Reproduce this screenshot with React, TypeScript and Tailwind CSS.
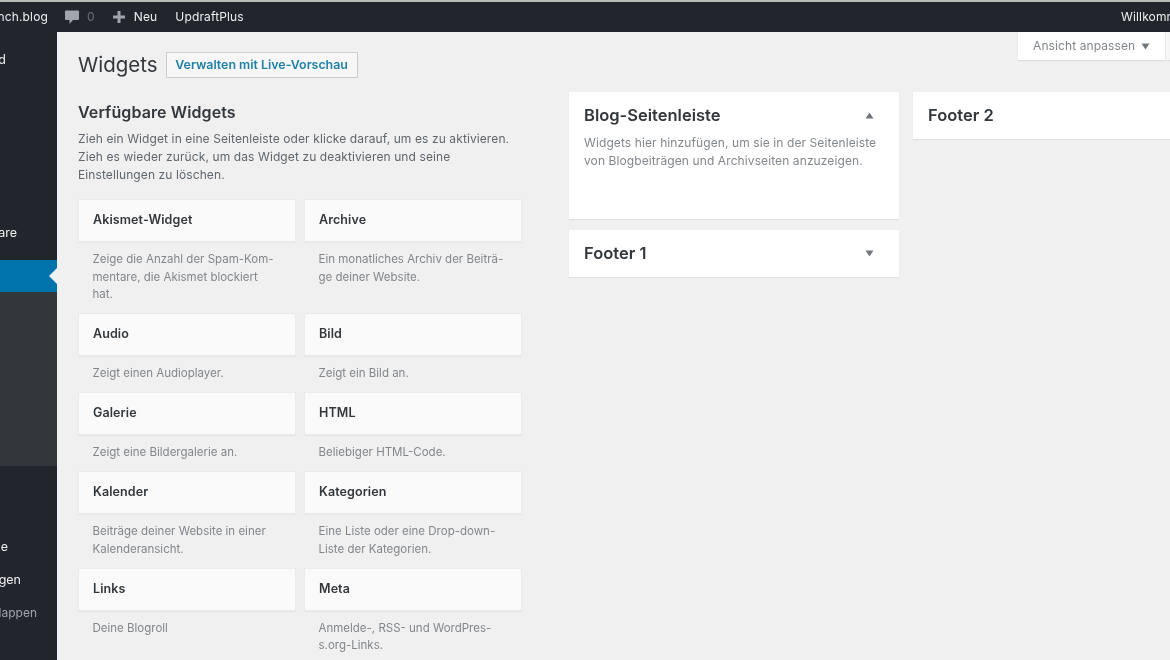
import React from "react";

const font = { fontFamily: "Inter, 'Noto Sans', sans-serif" };

type W = { title: string; desc: string[] };
const rows: [W, W][] = [
  [
    { title: "Akismet-Widget", desc: ["Zeige die Anzahl der Spam-Kom-", "mentare, die Akismet blockiert", "hat."] },
    { title: "Archive", desc: ["Ein monatliches Archiv der Beiträ-", "ge deiner Website."] },
  ],
  [
    { title: "Audio", desc: ["Zeigt einen Audioplayer."] },
    { title: "Bild", desc: ["Zeigt ein Bild an."] },
  ],
  [
    { title: "Galerie", desc: ["Zeigt eine Bildergalerie an."] },
    { title: "HTML", desc: ["Beliebiger HTML-Code."] },
  ],
  [
    { title: "Kalender", desc: ["Beiträge deiner Website in einer", "Kalenderansicht."] },
    { title: "Kategorien", desc: ["Eine Liste oder eine Drop-down-", "Liste der Kategorien."] },
  ],
  [
    { title: "Links", desc: ["Deine Blogroll"] },
    { title: "Meta", desc: ["Anmelde-, RSS- und WordPres-", "s.org-Links."] },
  ],
];

function Widget({ w }: { w: W }) {
  return (
    <div>
      <div className="h-[43px] bg-[#fafafa] border border-[#ebebeb] shadow-[0_1px_1px_rgba(0,0,0,0.04)] flex items-center pl-[14px] text-[12.5px] tracking-[0.1px] font-semibold text-[#32373c]">
        {w.title}
      </div>
      <div className="pt-[9px] pb-[9.5px] pl-[14.5px] text-[11.5px] leading-[17.5px] text-[#82878c] whitespace-nowrap">
        {w.desc.map((d) => (
          <div key={d}>{d}</div>
        ))}
      </div>
    </div>
  );
}

function Triangle({ up }: { up?: boolean }) {
  return (
    <svg width="9" height="7" viewBox="0 0 9 7" className="text-[#72777c]">
      <path d={up ? "M4.5 0.5 L8.5 6.5 L0.5 6.5 Z" : "M0.5 0.5 L8.5 0.5 L4.5 6.5 Z"} fill="currentColor" />
    </svg>
  );
}

function SideItem({ label, pr, cls = "text-[#eeeeee] text-[12.5px]", h }: { label: string; pr: string; cls?: string; h: string }) {
  return (
    <div className={`flex items-center justify-end overflow-hidden whitespace-nowrap ${h} ${pr} ${cls}`}>
      {label}
    </div>
  );
}

export default function App() {
  return (
    <div className="w-[1170px] h-[660px] overflow-hidden flex flex-col bg-[#f0f0f0] blur-[0.5px]" style={font}>
      <div className="h-[2px] bg-[#b8bdb8] shrink-0" />
      <header className="h-[30px] shrink-0 bg-[#21262c] text-[#eeeeee] text-[12px] tracking-[0.15px] flex items-center">
        <div className="w-[48px] flex justify-end overflow-hidden whitespace-nowrap">Testbench.blog</div>
        <svg width="16" height="16" viewBox="0 0 16 16" className="ml-[16px] text-[#a0a5aa]">
          <path d="M2 1.5 H14 Q15 1.5 15 2.5 V10 Q15 11 14 11 H9 L5.5 15 V11 H2 Q1 11 1 10 V2.5 Q1 1.5 2 1.5 Z" fill="currentColor" />
        </svg>
        <span className="ml-[7px] text-[#6b7075]">0</span>
        <svg width="14" height="14" viewBox="0 0 14 14" className="ml-[17px] text-[#a0a5aa]">
          <path d="M5.5 1 H8.5 V5.5 H13 V8.5 H8.5 V13 H5.5 V8.5 H1 V5.5 H5.5 Z" fill="currentColor" />
        </svg>
        <span className="ml-[8px]">Neu</span>
        <span className="ml-[18px]">UpdraftPlus</span>
        <div className="ml-auto w-[49px] overflow-hidden whitespace-nowrap">Willkommen, admin</div>
      </header>
      <div className="flex-1 flex min-h-0">
        <aside className="w-[57px] shrink-0 bg-[#21262c] flex flex-col">
          <div className="h-[228px] pt-[16px]">
            <SideItem label="Dashboard" pr="pr-[51px]" h="h-[24px]" />
            <div className="h-[149px]" />
            <SideItem label="Kommentare" pr="pr-[40px]" h="h-[24px]" />
          </div>
          <div className="relative h-[32px] bg-[#0073aa]">
            <div className="absolute right-0 top-[8px] w-0 h-0 border-y-[8px] border-y-transparent border-r-[8px] border-r-[#f0f0f0]" />
          </div>
          <div className="h-[174px] bg-[#32373c]" />
          <div className="h-[69px]" />
          <SideItem label="Werkzeuge" pr="pr-[49px]" h="h-[24px]" />
          <div className="h-[9px]" />
          <SideItem label="Einstellungen" pr="pr-[36px]" h="h-[24px]" />
          <div className="h-[9px]" />
          <SideItem label="Menü einklappen" pr="pr-[20px]" cls="text-[#a0a5aa] text-[12px]" h="h-[24px]" />
        </aside>
        <main className="relative flex-1 min-w-0 pl-[21px] pt-[20px] text-[#32373c]">
          <div className="absolute top-0 left-[961px] w-[147px] h-[28px] bg-white shadow-[0_1px_1px_rgba(0,0,0,0.08)] flex items-center pl-[15px] gap-[6px] text-[12px] tracking-[0.1px] text-[#82878c]">
            Ansicht anpassen
            <svg width="9" height="7" viewBox="0 0 9 7"><path d="M0.5 0.5 L8.5 0.5 L4.5 6.5 Z" fill="#72777c" /></svg>
          </div>
          <div className="absolute top-0 left-[1109px] w-[10px] h-[28px] bg-[#f6f6f6] shadow-[0_1px_1px_rgba(0,0,0,0.06)]" />
          <div className="flex items-center h-[26px]">
            <h1 className="text-[20.5px] font-normal text-[#32373c] leading-none">Widgets</h1>
            <div className="ml-[8px] h-[26px] w-[192px] bg-[#f7f7f7] border border-[#cccccc] flex items-center justify-center text-[12.4px] font-semibold text-[#1f80a6]">
              Verwalten mit Live-Vorschau
            </div>
          </div>
          <div className="flex mt-[14px]">
            <section className="w-[444px] shrink-0">
              <h2 className="text-[16px] tracking-[0.1px] font-semibold leading-[20px] pt-[10px] text-[#32373c]">Verfügbare Widgets</h2>
              <div className="mt-[8px] text-[12px] tracking-[0.1px] leading-[18px] text-[#5f666d] whitespace-nowrap">
                <div>Zieh ein Widget in eine Seitenleiste oder klicke darauf, um es zu aktivieren.</div>
                <div>Zieh es wieder zurück, um das Widget zu deaktivieren und seine</div>
                <div>Einstellungen zu löschen.</div>
              </div>
              <div className="mt-[15px] grid grid-cols-[218px_218px] gap-x-[8px]">
                {rows.map(([a, b]) => (
                  <React.Fragment key={a.title}>
                    <Widget w={a} />
                    <Widget w={b} />
                  </React.Fragment>
                ))}
              </div>
            </section>
            <section className="ml-[47px] w-[330px] shrink-0 flex flex-col gap-[11px]">
              <div className="h-[127px] bg-white shadow-[0_1px_1px_rgba(0,0,0,0.06)] pl-[15px] pr-[15px]">
                <div className="h-[47px] flex items-center justify-between pr-[10px] text-[16.5px] font-semibold">
                  Blog-Seitenleiste
                  <Triangle up />
                </div>
                <div className="-mt-[5px] text-[12px] tracking-[0.1px] leading-[18px] text-[#82878c] whitespace-nowrap">
                  <div>Widgets hier hinzufügen, um sie in der Seitenleiste</div>
                  <div>von Blogbeiträgen und Archivseiten anzuzeigen.</div>
                </div>
              </div>
              <div className="h-[47px] bg-white shadow-[0_1px_1px_rgba(0,0,0,0.06)] pl-[15px] flex items-center justify-between pr-[25px] text-[16.5px] font-semibold">
                Footer 1
                <Triangle />
              </div>
            </section>
            <section className="ml-[14px] w-[258px] shrink-0">
              <div className="h-[47px] bg-white shadow-[0_1px_1px_rgba(0,0,0,0.06)] pl-[15px] flex items-center text-[16.5px] font-semibold">
                Footer 2
              </div>
            </section>
          </div>
        </main>
      </div>
    </div>
  );
}
